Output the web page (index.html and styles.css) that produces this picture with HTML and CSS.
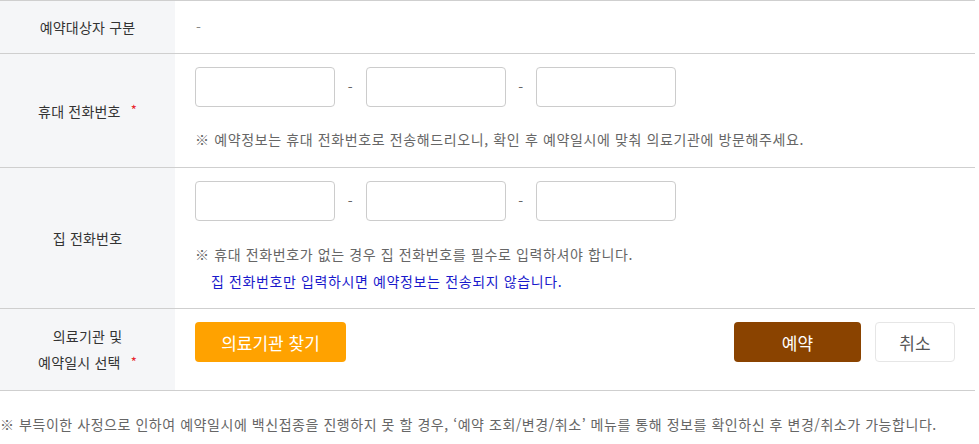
FILE: index.html
```html
<!DOCTYPE html>
<html lang="ko">
<head>
<meta charset="utf-8">
<link rel="stylesheet" href="styles.css">
</head>
<body>
<div class="form">
  <div class="row row-1">
    <div class="label">예약대상자 구분</div>
    <div class="field"><span class="plain">-</span></div>
  </div>
  <div class="row row-2">
    <div class="label">휴대 전화번호<span class="req">*</span></div>
    <div class="field">
      <div class="phone">
        <input class="inp" type="text"><span class="sep">-</span><input class="inp" type="text"><span class="sep">-</span><input class="inp" type="text">
      </div>
      <p class="note">※ 예약정보는 휴대 전화번호로 전송해드리오니, 확인 후 예약일시에 맞춰 의료기관에 방문해주세요.</p>
    </div>
  </div>
  <div class="row row-3">
    <div class="label">집 전화번호</div>
    <div class="field">
      <div class="phone">
        <input class="inp" type="text"><span class="sep">-</span><input class="inp" type="text"><span class="sep">-</span><input class="inp" type="text">
      </div>
      <p class="note">※ 휴대 전화번호가 없는 경우 집 전화번호를 필수로 입력하셔야 합니다.</p>
      <p class="note blue">집 전화번호만 입력하시면 예약정보는 전송되지 않습니다.</p>
    </div>
  </div>
  <div class="row row-4">
    <div class="label two">의료기관 및<br>예약일시 선택<span class="req">*</span></div>
    <div class="field actions">
      <button class="btn btn-find" type="button">의료기관 찾기</button>
      <div class="btn-group">
        <button class="btn btn-ok" type="button">예약</button>
        <button class="btn btn-cancel" type="button">취소</button>
      </div>
    </div>
  </div>
</div>
<p class="foot">※ 부득이한 사정으로 인하여 예약일시에 백신접종을 진행하지 못 할 경우, ‘예약 조회/변경/취소’ 메뉴를 통해 정보를 확인하신 후 변경/취소가 가능합니다.</p>
</body>
</html>
```
FILE: styles.css
```css
* { box-sizing: border-box; }
html, body { margin: 0; padding: 0; background: #fff; }
body {
  font-family: "Noto Sans CJK KR", "Noto Sans", sans-serif;
  font-size: 14px;
  color: #333;
  width: 979px;
  height: 444px;
  overflow: hidden;
}
.form {
  width: 975px;
  border-top: 1px solid #cfcfcf;
}
.row {
  display: grid;
  grid-template-columns: 175px 1fr;
  border-bottom: 1px solid #cfcfcf;
}
.label {
  background: #f5f6f8;
  display: flex;
  align-items: center;
  justify-content: center;
  text-align: center;
  color: #333;
  line-height: 20px;
  letter-spacing: 0.2px;
}
.label.two {
  display: block;
  padding-top: 14px;
  line-height: 26px;
}
.req {
  color: #e8262e;
  font-size: 13px;
  margin-left: 10px;
  position: relative;
  top: -1px;
}
.field {
  padding: 13px 20px 14px;
}
.row-1 .field {
  height: 52px;
  display: flex;
  align-items: center;
  padding: 0 21px;
}
.plain { color: #888; }
.phone {
  display: flex;
  align-items: center;
}
.inp {
  width: 140px;
  height: 40px;
  border: 1px solid #cccccc;
  border-radius: 4px;
  background: #fff;
  margin: 0;
  padding: 0 10px;
  font: inherit;
}
.sep {
  width: 30.5px;
  text-align: center;
  color: #666;
}
.note {
  margin: 0;
  line-height: 27px;
  color: #666;
  letter-spacing: 0.62px;
}
.row-2 .note { margin-top: 19px; }
.row-3 .field { padding-bottom: 13px; }
.row-3 .note:first-of-type { margin-top: 20px; }
.note.blue {
  color: #1a1acc;
  padding-left: 16px;
}
.actions {
  display: flex;
  justify-content: space-between;
  align-items: flex-start;
  padding: 13px 20px 28px 20px;
}
.btn-group {
  display: flex;
  gap: 14px;
}
.btn {
  height: 40px;
  border-radius: 4px;
  border: 1px solid transparent;
  font-family: inherit;
  font-size: 17px;
  padding: 0;
  cursor: pointer;
}
.btn-find {
  width: 151px;
  background: #ffa200;
  color: #fff;
}
.btn-ok {
  width: 127px;
  background: #8a4300;
  color: #fff;
}
.btn-cancel {
  width: 80px;
  background: #fff;
  border-color: #e6e6e6;
  color: #555;
}
.foot {
  margin: 23px 0 0;
  line-height: 20px;
  color: #666;
  white-space: nowrap;
  letter-spacing: 0.55px;
}
```
